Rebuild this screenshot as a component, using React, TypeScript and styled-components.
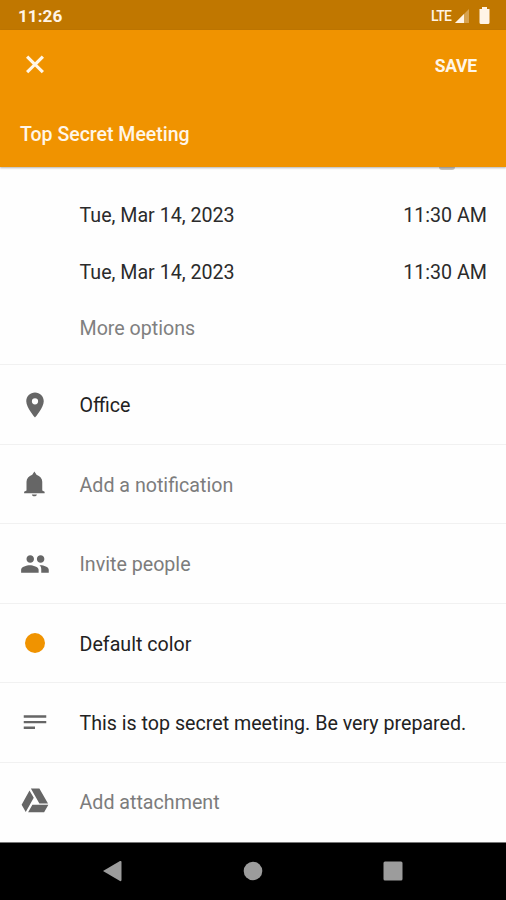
import React from "react";
import styled, { createGlobalStyle } from "styled-components";

const GlobalStyle = createGlobalStyle`
  * { box-sizing: border-box; }
  body { margin: 0; background: #fff; font-family: Roboto, "Liberation Sans", sans-serif; }
`;

const Screen = styled.div`
  width: 506px;
  height: 900px;
  display: flex;
  flex-direction: column;
  overflow: hidden;
  background: #fefefe;
`;

const StatusBar = styled.div`
  height: 30px;
  flex: none;
  display: flex;
  align-items: center;
  justify-content: space-between;
  padding: 2px 16px 0 18px;
  background: #c07700;
  color: #fff4e6;
`;

const Clock = styled.span`
  font-size: 17.2px;
  font-weight: 700;
  line-height: 28px;
`;

const StatusIcons = styled.div`
  display: flex;
  align-items: center;
  height: 28px;
`;

const Network = styled.span`
  font-size: 14px;
  font-weight: 500;
  letter-spacing: -0.8px;
  margin: -1px 3px 0 0;
`;

const Header = styled.header`
  height: 137px;
  flex: none;
  background: #f09300;
  color: #fff6e8;
  padding: 14px 29px 0 20px;
  box-shadow: 0 1px 2px rgba(0, 0, 0, 0.3);
  z-index: 1;
`;

const Actions = styled.div`
  height: 42px;
  display: flex;
  align-items: center;
  justify-content: space-between;
`;

const IconButton = styled.button`
  display: flex;
  padding: 0;
  border: 0;
  background: none;
  color: inherit;
`;

const SaveButton = styled.button`
  padding: 1px 0 0;
  border: 0;
  background: none;
  color: inherit;
  font: 700 17.5px/24px Roboto, sans-serif;
  letter-spacing: -0.2px;
`;

const Title = styled.h1`
  margin: 35px 0 0;
  font-size: 19.5px;
  line-height: 27px;
  font-weight: 500;
`;

const Content = styled.main`
  flex: 1;
  display: flex;
  flex-direction: column;
`;

const Schedule = styled.section`
  height: 198px;
  flex: none;
  padding: 0 19px 0 79.5px;
  border-bottom: 1px solid #f1f1f1;
`;

const SwitchEdge = styled.div`
  width: 16px;
  height: 3px;
  margin: 0 32px 17px auto;
  border-radius: 0 0 8px 8px;
  background: #c9c6c1;
`;

const ScheduleRow = styled.div<{ $muted?: boolean }>`
  height: 56.7px;
  display: flex;
  align-items: center;
  justify-content: space-between;
  font-size: 19.65px;
  color: ${(p) => (p.$muted ? "#808080" : "#2b2b2b")};
`;

const DetailRow = styled.div`
  height: 79.5px;
  flex: none;
  display: flex;
  align-items: center;
  padding: 3px 19px 0 20px;
  border-bottom: 1px solid #f1f1f1;
  &:last-child {
    padding-top: 1px;
    border-bottom-color: transparent;
  }
`;

const IconSlot = styled.div`
  width: 30px;
  height: 30px;
  margin: -2px 29.5px 0 0;
  display: flex;
  align-items: center;
  justify-content: center;
  color: #666;
`;

const Label = styled.span<{ $muted?: boolean }>`
  font-size: 19.65px;
  white-space: nowrap;
  color: ${(p) => (p.$muted ? "#7c7c7c" : "#222")};
`;

const ColorDot = styled.span`
  width: 20px;
  height: 20px;
  border-radius: 50%;
  background: #f09300;
`;

const NavBar = styled.nav`
  height: 58px;
  flex: none;
  display: flex;
  align-items: center;
  justify-content: space-between;
  padding: 0 103px 2px 102px;
  background: #000;
  border-top: 1px solid #777;
  color: #9c9c9c;
`;

const Icon = ({ d }: { d: string }) => (
  <svg width="30" height="30" viewBox="0 0 24 24" fill="currentColor">
    <path d={d} />
  </svg>
);

const paths = {
  close: "M19.200 6.200 17.400 4.400 12 9.800 6.600 4.400 4.800 6.200 10.200 11.500 4.800 16.800 6.600 18.600 12 13.200 17.400 18.600 19.200 16.800 13.800 11.500z",
  place: "M12 2C8.130 2 5 5.130 5 9c0 5.250 7 13 7 13s7-7.750 7-13c0-3.870-3.130-7-7-7zm0 9.500a2.500 2.500 0 0 1 0-5 2.500 2.500 0 0 1 0 5z",
  bell: "M9.500 20.300h4c0 .9-.9 1.400-2 1.400s-2-.5-2-1.400zM17.800 17.200V10.200c0-2.700-1.800-4.600-4.600-5.600L11.500 2 9.800 4.600C7 5.600 5.200 7.500 5.200 10.200v7L3.300 18.100v1.200h16.400v-1.200z",
  people: "M16.500 11c1.660 0 2.990-1.340 2.990-3S18.160 5 16.500 5s-3 1.340-3 3 1.340 3 3 3zM8.200 11c1.660 0 2.990-1.340 2.990-3S9.860 5 8.200 5s-3 1.340-3 3 1.340 3 3 3zm-.4 1.900C5.300 12.900.9 14.100.9 16.500V19h14v-2.500c0-2.400-4.600-3.600-7.100-3.600zm8.700 0c-.29 0-.62.020-.97.050 1.160.84 1.470 1.970 1.470 3.450V19h6v-2.500c0-2.330-4.170-3.600-6.500-3.600z",
  notes: "M3 5.800h18v1.900H3zm0 4.500h18v1.900H3zm0 4.500h9v1.900H3z",
  drive: "M7.600 3.500 1.300 15l3.300 5.800L11 9.400zM9.900 15 6.500 20.900h12.800l3.400-5.900zm12.500-1L15.500 2H8.700l6.800 12z",
};

const details = [
  { icon: <Icon d={paths.place} />, label: "Office" },
  { icon: <Icon d={paths.bell} />, label: "Add a notification", muted: true },
  { icon: <Icon d={paths.people} />, label: "Invite people", muted: true },
  { icon: <ColorDot />, label: "Default color" },
  { icon: <Icon d={paths.notes} />, label: "This is top secret meeting. Be very prepared." },
  { icon: <Icon d={paths.drive} />, label: "Add attachment", muted: true },
];

export default function App() {
  return (
    <Screen>
      <GlobalStyle />
      <StatusBar>
        <Clock>11:26</Clock>
        <StatusIcons>
          <Network>LTE</Network>
          <svg width="36" height="18" viewBox="0 0 36 18" fill="currentColor">
            <path d="M1 16 15 2v14z" opacity=".35" />
            <path d="M1 16 10 7v9z" />
            <path d="M25.500 2H28V0h5v2h2.500v13.500q0 1.500-1.500 1.500h-7q-1.500 0-1.500-1.500z" />
          </svg>
        </StatusIcons>
      </StatusBar>
      <Header>
        <Actions>
          <IconButton aria-label="Close"><Icon d={paths.close} /></IconButton>
          <SaveButton>SAVE</SaveButton>
        </Actions>
        <Title>Top Secret Meeting</Title>
      </Header>
      <Content>
        <Schedule>
          <SwitchEdge />
          <ScheduleRow><span>Tue, Mar 14, 2023</span><span>11:30 AM</span></ScheduleRow>
          <ScheduleRow><span>Tue, Mar 14, 2023</span><span>11:30 AM</span></ScheduleRow>
          <ScheduleRow $muted><span>More options</span></ScheduleRow>
        </Schedule>
        {details.map((item) => (
          <DetailRow key={item.label}>
            <IconSlot>{item.icon}</IconSlot>
            <Label $muted={item.muted}>{item.label}</Label>
          </DetailRow>
        ))}
      </Content>
      <NavBar>
        <svg width="20" height="22" viewBox="0 0 20 22" fill="currentColor"><path d="M1 11 18 1q1.500-.5 1.500 1v18q0 1.500-1.500 1z" /></svg>
        <svg width="20" height="20" viewBox="0 0 20 20" fill="currentColor"><circle cx="10" cy="10" r="9.300" /></svg>
        <svg width="20" height="20" viewBox="0 0 20 20" fill="currentColor"><rect x=".5" y=".5" width="19" height="19" rx="1.500" /></svg>
      </NavBar>
    </Screen>
  );
}
